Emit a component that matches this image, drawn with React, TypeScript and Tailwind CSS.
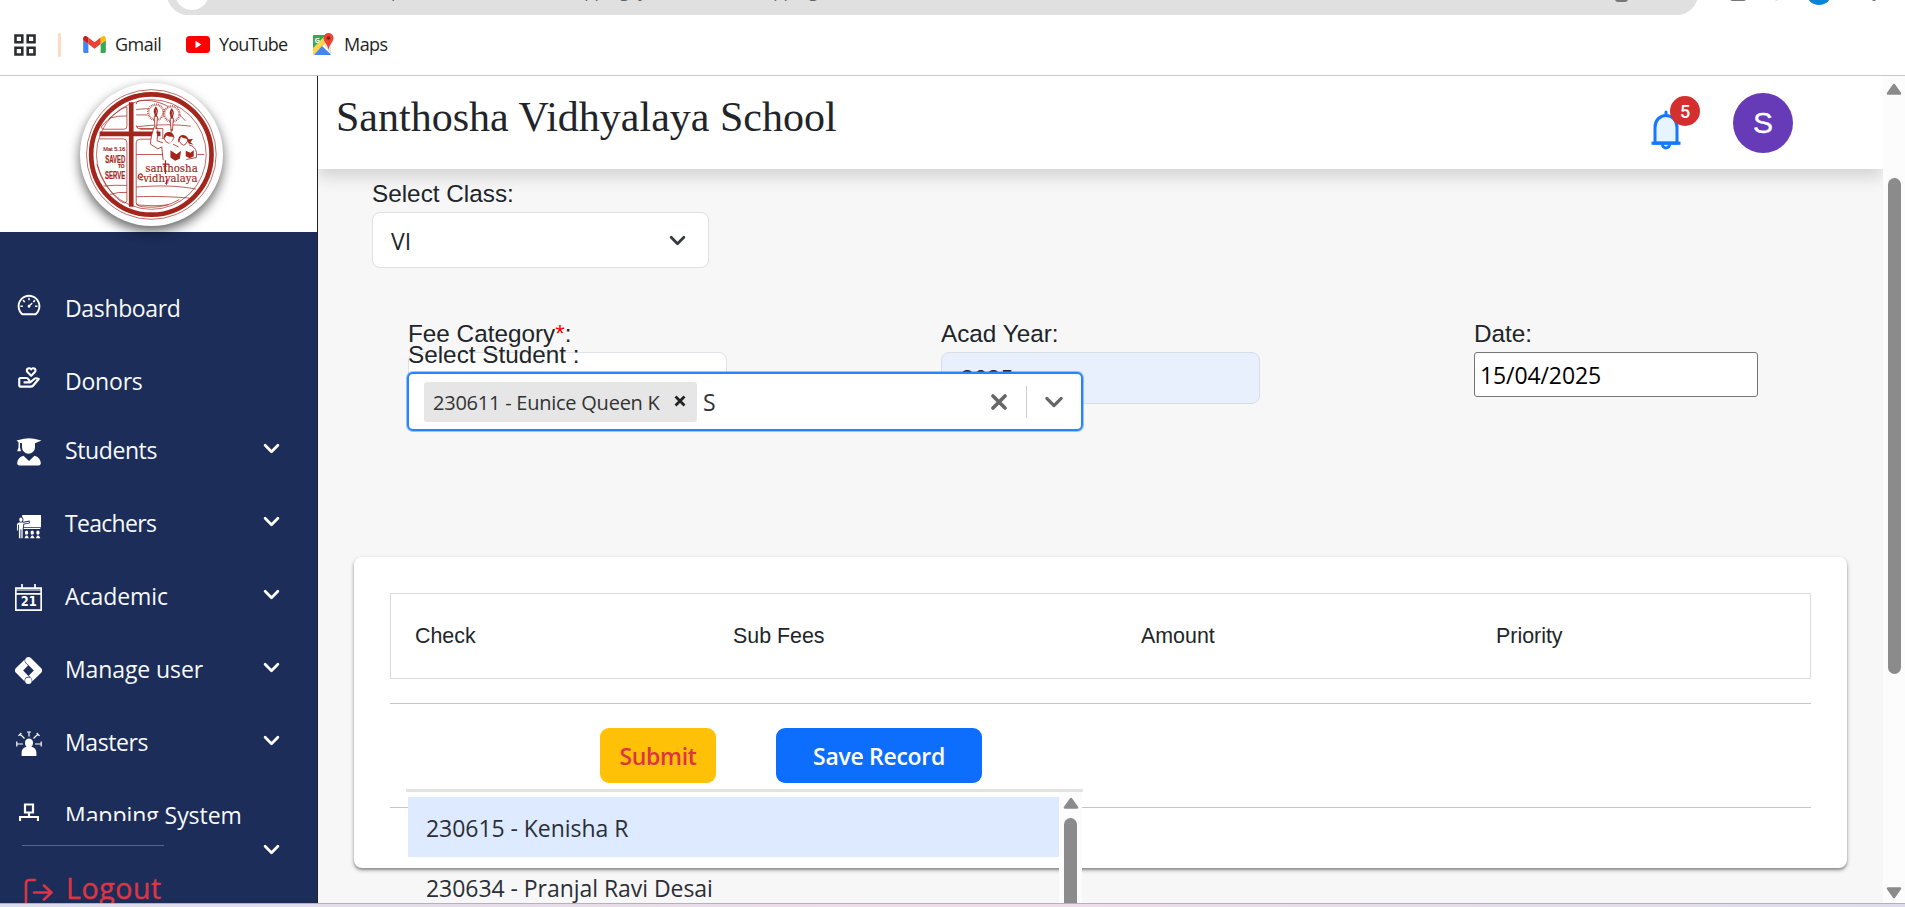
import type { ReactNode } from "react";
import { AiOutlineDashboard } from "react-icons/ai";
import { BiDonateHeart } from "react-icons/bi";
import { GiTeacher } from "react-icons/gi";
import { SiGoogletagmanager } from "react-icons/si";

const UI = "font-['Open_Sans','Noto_Sans',sans-serif]";
const ARIAL = "font-['Liberation_Sans',Arial,sans-serif]";

function Chevron({ className }: { className: string }) {
  return (
    <svg viewBox="0 0 16 10" className={className} fill="none" stroke="currentColor" strokeWidth="2.6" strokeLinecap="round" strokeLinejoin="round">
      <path d="M2 2l6 6 6-6" />
    </svg>
  );
}

function BellIcon() {
  return (
    <svg viewBox="0 0 30 42" className="h-[42px] w-[30px]" fill="none" stroke="#1677ff" strokeWidth="3">
      <path d="M4 34V18.500C4 11.500 8.500 6.500 15 6.500s11 5 11 12V34z" fill="#e6f4ff" />
      <path d="M.5 34.200h29" strokeWidth="3.200" />
      <path d="M15 6V3" strokeWidth="3" strokeLinecap="round" />
      <path d="M11.500 35.500a3.500 3.500 0 0 0 7 0" />
    </svg>
  );
}

function StudentIcon() {
  return (
    <svg viewBox="0 0 26 28" className="mt-1 h-7 w-[26px]" fill="currentColor">
      <path d="M.5 2.600 8 .8q5-1 10 0l7.500 1.800L19 5.300v3.900a6.500 6.500 0 1 1-13 0V5.200l-2-.3v4.300l1 4H1.200l1.300-4V4.300z" />
      <path d="M7.500 17.800 13 23l5.500-5.200c4 1 6 3.600 6.300 7.200.1 1.400-.9 2.400-2.300 2.400h-19c-1.400 0-2.400-1-2.300-2.400.300-3.600 2.300-6.200 6.300-7.200z" />
    </svg>
  );
}

function CalendarIcon() {
  return (
    <svg viewBox="0 0 27 27" className="mt-1 size-[27px]" fill="none" stroke="currentColor">
      <path d="M.8 4.200h25.400v22H.8zM.8 9.800h25.400M7 0v4.500M20 0v4.500" strokeWidth="1.700" />
      <path d="M.8 6h25.400" strokeWidth="1" />
      <text x="13.700" y="21.800" textAnchor="middle" fontSize="13.500" fontWeight="700" fill="currentColor" stroke="none" fontFamily="DejaVu Sans, sans-serif" textLength="16" lengthAdjust="spacingAndGlyphs">21</text>
    </svg>
  );
}

function MastersIcon() {
  return (
    <svg viewBox="0 0 26 26" className="mt-1 size-[26px]" fill="currentColor" stroke="currentColor">
      <path d="M13 7.500a4 4 0 0 1 4 4.200c0 1.800-.6 3.200-1.600 4.100 3.200.7 5 2.700 5 6.200v3H5.600v-3c0-3.500 1.800-5.500 5-6.200-1-.9-1.600-2.300-1.600-4.100a4 4 0 0 1 4-4.200z" stroke="none" />
      <path d="M13 1v4.500M11 1h4M8.500 7.500 4 3M2.500 4.800 5.300 2M17.500 7.500 22 3M23.500 4.800 20.700 2M7 13H1M.8 10.500v5M19 13h6M25.200 10.500v5" fill="none" strokeWidth="1.200" />
    </svg>
  );
}

function MappingIcon() {
  return (
    <svg viewBox="0 0 20 24" className="h-6 w-5" fill="none" stroke="currentColor" strokeWidth="2.2">
      <path d="M6 1.500h8v8H6zM10 9.500V14M1 18v-4h18v4" />
    </svg>
  );
}

function LogoutIcon() {
  return (
    <svg viewBox="0 0 30 30" className="size-[30px] shrink-0" fill="none" stroke="currentColor" strokeWidth="2.600" strokeLinecap="round" strokeLinejoin="round">
      <path d="M11 2H5.500C3.500 2 2 3.200 2 5.200v19.600C2 26.800 3.500 28 5.500 28H11M10 14.500h17.500M20 7.500l7.500 7-7.500 7" />
    </svg>
  );
}

function AppsIcon() {
  return (
    <svg viewBox="0 0 22 22" className="size-[22px]" fill="none" stroke="#2b2c30" strokeWidth="2.600">
      <path d="M1.500 1.500h6.800v6.800H1.500zM13.700 1.500h6.800v6.800h-6.800zM1.500 13.700h6.800v6.800H1.500zM13.700 13.700h6.800v6.800h-6.800z" />
    </svg>
  );
}

function GmailIcon() {
  return (
    <svg viewBox="0 0 24 18" className="h-[17px] w-[23px]">
      <path d="M1.600 18H5.500V8.600L0 4.500v11.900C0 17.300.7 18 1.600 18z" fill="#4285f4" />
      <path d="M18.500 18h3.900c.9 0 1.600-.7 1.600-1.600V4.500l-5.500 4.100z" fill="#34a853" />
      <path d="M18.500 1.700v6.900L24 4.500V2.400c0-2-2.300-3.200-3.900-2z" fill="#fbbc04" />
      <path d="M5.500 8.600V1.700L12 6.500l6.500-4.800v6.900L12 13.400z" fill="#ea4335" />
      <path d="M0 2.400v2.100l5.500 4.100V1.700L3.900.4C2.300-.8 0 .4 0 2.400z" fill="#c5221f" />
    </svg>
  );
}

function YouTubeIcon() {
  return (
    <svg viewBox="0 0 24 17" className="h-[17px] w-6">
      <rect width="24" height="17" rx="3.500" fill="#f00" />
      <path d="M9.500 4.800v7.400l5.800-3.700z" fill="#fff" />
    </svg>
  );
}

function MapsIcon() {
  return (
    <svg viewBox="0 0 24 24" className="size-6">
      <path d="M2 3h18v18H2z" fill="#fff" />
      <path d="M3 2h12L2 16V3c0-.6.4-1 1-1z" fill="#34a853" />
      <path d="M2 15 14 3l3 5L3 22c-.6 0-1-.4-1-1z" fill="#fbd34d" />
      <path d="m11 13 9 8.500c-.2.300-.6.500-1 .5H3z" fill="#4285f4" />
      <path d="m13 12 3-3 4 5v7z" fill="#dfe3e8" />
      <path d="M17.500 0a5 5 0 0 1 5 5c0 3.600-4.300 6.500-5 12-.7-5.500-5-8.400-5-12a5 5 0 0 1 5-5z" fill="#ea4335" />
      <circle cx="17.500" cy="5" r="1.800" fill="#8c1c13" />
      <text x="3.500" y="10" fontSize="7.500" fontWeight="700" fill="#fff" fontFamily="Open Sans, sans-serif">G</text>
    </svg>
  );
}

function Torch({ x, y }: { x: number; y: number }) {
  return (
    <g transform={`translate(${x} ${y})`}>
      <circle r="24" fill="#fff" stroke="#a3251c" strokeWidth="5" strokeDasharray="2 3.400" />
      <circle r="21" fill="#fff" stroke="#a3251c" strokeWidth="1.200" />
      <path d="M0-18c6 8 8 15 5 21l-2 9h-6l-2-9c-3-6-1-13 5-21z" fill="#a3251c" />
      <path d="M0-8c3 5 3 7 0 12" fill="none" stroke="#fff" strokeWidth="1.500" />
      <path d="M-5 13H5L2 50h-4z" fill="#fff" stroke="#a3251c" strokeWidth="2.500" />
    </g>
  );
}

function SchoolLogo() {
  const red = "#a3251c";
  return (
    <svg viewBox="60 20 430 430" className="size-[143px] rounded-full bg-white shadow-[0_5px_12px_rgba(0,0,0,0.62)]">
      <circle cx="274.500" cy="235" r="195" fill="none" stroke={red} strokeWidth="2" />
      <circle cx="274.500" cy="235" r="181" fill="#fff" stroke={red} strokeWidth="14" />
      <circle cx="274.500" cy="235" r="165" fill="none" stroke={red} strokeWidth="2" />
      <g fill="none" stroke={red} strokeWidth="2.200">
        <path d="M229 84q0-10 10-11c60-6 106 24 138 61M229 100c40-5 80-4 112 8M229 116h34M229 152c60-8 120-8 164-2M229 147q2 12 14 12h40M201 92c-20 4-55 35-75 57q-5 10 8 10h58q9 0 9-9zM148 126q25-8 53-7" />
        <path d="M229 380V200q0-11 12-11h68v-32h-70M118 188h72q11 0 11 11v175q-4 12-18 2c-30-20-60-70-72-112M229 235h205M229 333c70-6 130-4 180 6M229 362c60-2 110 0 160 4M229 380q2 10 18 12c50 6 86-6 112-22M229 386c40 4 70 4 98 0M130 330q35-4 71-2M150 355q25-8 51-6" />
      </g>
      <path d="M207 78h14v88h81v14h-81v212h-14V180h-88v-14h88z" fill={red} />
      <Torch x={288} y={108} />
      <Torch x={336} y={113} />
      <path d="M284 150c-8 20-12 40-12 54l22 14 12-6 5 40h104l-5-40-20-12-34 8-24-16-36-4z" fill="#fff" />
      <g fill="none" stroke={red} strokeWidth="2.500">
        <path d="M284 150c-8 20-12 40-12 54l22 14 12-6 4 40M294 160l-2 34 18 6M312 186q14 30 30 0M356 190q16 34 30 0M388 206q18 4 22 22v16l-30 6M340 204l16 8M334 158v14" />
      </g>
      <path d="M312 190c-4-28 30-30 32-4l-6-4q-12 0-18-4zM356 200c-6-34 36-28 30 0l-6-12q-12-2-16-6zM384 190l16-2-8 10 10 8-16-4zM332 222l18 12 14-10-4 24-14 6-14-10zM378 224l14 6 10-8v18l-12 6-12-6z" fill={red} />
      <path d="M322 184q6 4 16 2-2 14-8 14t-8-16zM364 186q8 6 16 2-2 14-8 14t-8-16z" fill="#fff" />
      <g fill={red}>
        <text x="130" y="223" fontSize="17" fontFamily="Liberation Sans, sans-serif" textLength="66" lengthAdjust="spacingAndGlyphs" stroke={red} strokeWidth="0.600">Mat 5.16</text>
        <g fontFamily="Liberation Sans Narrow, Liberation Sans, sans-serif" fontWeight="700" stroke={red} strokeWidth="0.600">
          <text x="136" y="260" fontSize="31" textLength="60" lengthAdjust="spacingAndGlyphs">SAVED</text>
          <text x="174" y="277" fontSize="15" textLength="20" lengthAdjust="spacingAndGlyphs">TO</text>
          <text x="135" y="308" fontSize="31" textLength="61" lengthAdjust="spacingAndGlyphs">SERVE</text>
        </g>
        <g fontFamily="DejaVu Serif, serif" stroke={red} strokeWidth="0.500">
          <text x="256" y="288" fontSize="35" textLength="158" lengthAdjust="spacingAndGlyphs">santhosha</text>
          <text x="250" y="317" fontSize="31" textLength="163" lengthAdjust="spacingAndGlyphs">vidhyalaya</text>
        </g>
      </g>
      <path d="M317 252v42M308 264h19M320 312v14M250 310c-10 4-18-4-14-12s14-4 11 3-8 2-6-1" fill="none" stroke={red} strokeWidth="3.500" />
    </svg>
  );
}

type NavItem = { label: string; icon: ReactNode; chevron?: boolean; row?: string; text: string };

const navItems: NavItem[] = [
  { label: "Dashboard", icon: <AiOutlineDashboard className="mb-[5px] size-[26px]" />, text: "tracking-[-0.35px]" },
  { label: "Donors", icon: <BiDonateHeart className="mb-[5px] size-[26px]" />, text: "tracking-[-0.2px]" },
  { label: "Students", icon: <StudentIcon />, chevron: true, row: "-mt-1", text: "tracking-[-0.4px]" },
  { label: "Teachers", icon: <GiTeacher className="mt-[6px] size-[26px]" />, chevron: true, text: "tracking-[-0.7px]" },
  { label: "Academic", icon: <CalendarIcon />, chevron: true, text: "tracking-[-0.05px]" },
  { label: "Manage user", icon: <SiGoogletagmanager className="mt-[3px] size-[27px]" />, chevron: true, text: "tracking-[-0.1px]" },
  { label: "Masters", icon: <MastersIcon />, chevron: true, text: "tracking-[-0.4px]" },
  { label: "Mapping System", icon: <MappingIcon />, text: "tracking-[-0.05px]" },
];

function BrowserBar() {
  return (
    <div className="flex h-[76px] shrink-0 flex-col overflow-hidden border-b border-[#c8c8c8] bg-white">
      <div className="flex h-[15px] shrink-0 items-end pl-[167px]">
        <div className="flex h-[42px] w-[1531px] shrink-0 items-center rounded-full bg-[#e0e0e0] pl-[8px]">
          <span className="size-[34px] -translate-y-px rounded-full bg-white" />
          <span className="flex pb-[6px] pl-[182px] text-[17px] leading-6 whitespace-pre text-[#5f6368]">
            <span className="w-[168px]">port/</span>
            <span className="w-[189px]">mappingSystem</span>
            <span>mapping</span>
          </span>
          <span className="mr-[70px] ml-auto h-[26px] w-[13px] -translate-y-[5px] rounded-[3px] border-2 border-[#777]" />
        </div>
        <span className="mb-[14px] ml-[31px] h-1 w-[18px] shrink-0 rounded-b bg-[#777]" />
        <span className="mb-[14px] ml-[28px] h-5 w-[3px] shrink-0 rounded bg-[#ffd9c2]" />
        <span className="mb-[10px] ml-[28px] size-[26px] shrink-0 rounded-full bg-[#0a84d6]" />
        <span className="mb-[14px] ml-[40px] size-1 shrink-0 rounded-full bg-[#666]" />
      </div>
      <div className="flex h-[59px] items-center pl-[14px] text-[18px] text-[#1f1f1f]">
        <AppsIcon />
        <span className="ml-[22px] h-6 w-[3px] rounded bg-[#ffd9c2]" />
        <span className="ml-[22px] flex items-center gap-[9px]"><GmailIcon /><span className="w-[71px] tracking-[-0.03em]">Gmail</span></span>
        <span className="flex items-center gap-[9px]"><YouTubeIcon /><span className="w-[92px] tracking-[-0.045em]">YouTube</span></span>
        <span className="flex items-center gap-[9px]"><MapsIcon /><span className="tracking-[-0.03em]">Maps</span></span>
      </div>
    </div>
  );
}

function Sidebar() {
  return (
    <aside className="relative flex w-[318px] shrink-0 flex-col overflow-hidden border-r border-[#20222a] bg-[#1b2d58]">
      <div className="flex h-[156px] shrink-0 justify-center bg-white pt-[7px] pr-[14px]">
        <SchoolLogo />
      </div>
      <nav className="flex flex-col pt-[39px] text-[#f8f9fa]">
        {navItems.map((item) => (
          <div key={item.label} className={`flex h-[73px] shrink-0 items-center ${item.row ?? ""}`}>
            <span className="ml-[10px] flex w-[37px] shrink-0 justify-center text-white">{item.icon}</span>
            <span className={`ml-[18px] text-[23px] leading-9 whitespace-nowrap ${item.text}`}>{item.label}</span>
            {item.chevron && <Chevron className="mr-[37px] mb-[3px] ml-auto h-[11px] w-[17px] text-white" />}
          </div>
        ))}
      </nav>
      <div className="absolute top-[745px] left-0 h-[90px] w-[161px] bg-[#1b2d58]">
        <div className="mt-[24px] ml-[22px] h-px w-[142px] bg-[#566589]" />
        <div className="mt-[22px] flex items-center text-[#dc3545]">
          <span className="mt-[10px] ml-[24px]"><LogoutIcon /></span>
          <span className="ml-[12px] text-[28.5px] leading-10 font-medium tracking-[0.6px] [-webkit-text-stroke:0.4px_#dc3545]">Logout</span>
        </div>
      </div>
      <Chevron className="absolute top-[768px] left-[263px] h-[11px] w-[17px] text-white" />
    </aside>
  );
}

function Header() {
  return (
    <header className="relative z-10 flex h-[93px] shrink-0 bg-white pl-[18px] shadow-[0_8px_16px_rgba(0,0,0,0.15)]">
      <h1 className="pt-[16px] font-['Liberation_Serif',serif] text-[42px] leading-[50px] whitespace-nowrap text-[#212529]">Santhosha Vidhyalaya School</h1>
      <div className="relative mt-[33px] mr-[52px] ml-auto h-[42px] w-[30px]">
        <BellIcon />
        <span className="absolute -top-[13px] left-[19px] flex size-[30px] items-center justify-center rounded-full bg-[#d32f2f] font-['Roboto',sans-serif] text-[18px] font-medium text-white">5</span>
      </div>
      <div className="mt-[17px] mr-[90px] flex size-[60px] items-center justify-center rounded-full bg-[#673ab7] pb-[2px] font-['Liberation_Sans',Arial,sans-serif] text-[30px] text-white [-webkit-text-stroke:0.3px_white]">S</div>
    </header>
  );
}

function StudentSelect() {
  return (
    <div className="absolute top-[23px] left-[-1px] z-10 w-[676px]">
      <div className={`h-[33px] pl-px text-[24.3px] leading-[32px] text-[#212529] ${ARIAL}`}>Select Student :</div>
      <div className="flex h-[59px] items-center rounded-[6px] border-2 border-[#2684ff] bg-white pl-[15px] shadow-[0_0_0_1px_rgba(38,132,255,0.45)]">
        <div className="flex h-10 w-[273px] items-center rounded-[3px] bg-[#e6e6e6] pl-[9px] text-[20px] text-[#333]">
          <span className="pt-[2px] tracking-[-0.24px] whitespace-nowrap">230611 - Eunice Queen K</span>
          <svg viewBox="0 0 12 12" className="mr-[11px] mb-[2px] ml-auto size-3" stroke="#222" strokeWidth="2.800"><path d="M1.500 1.500l9 9M10.500 1.500l-9 9" /></svg>
        </div>
        <span className="ml-[6px] pt-[2px] text-[23px] text-[#333]">S</span>
        <svg viewBox="0 0 16 16" className="ml-auto size-4" stroke="#666" strokeWidth="3.600" strokeLinecap="round"><path d="M2 2l12 12M14 2L2 14" /></svg>
        <span className="ml-[19px] h-8 w-px bg-[#ccc]" />
        <Chevron className="mr-[17px] ml-[17px] h-[12px] w-5 text-[#666]" />
      </div>
    </div>
  );
}

function ScrollArrow({ down }: { down?: boolean }) {
  return (
    <svg viewBox="0 0 16 12" className={`h-3 w-4 shrink-0 ${down ? "rotate-180" : ""}`} fill="#8b8b8b" stroke="#8b8b8b" strokeWidth="2.500" strokeLinejoin="round">
      <path d="M8 2l6 8.500H2z" />
    </svg>
  );
}

function StudentMenu() {
  return (
    <div className="absolute top-[232px] left-[52px] z-10 flex h-[115px] w-[677px] overflow-hidden border-t-[3px] border-[#e3e3e3]">
      <div className="w-[653px] pl-[2px] text-[23px] tracking-[-0.05px] text-[#2b2f36]">
        <div className="h-[5px] bg-white" />
        <div className="flex h-[60px] items-center bg-[#deeaff] pt-[2px] pl-[18px]">230615 - Kenisha R</div>
        <div className="flex h-[60px] items-center pt-[2px] pl-[18px]">230634 - Pranjal Ravi Desai</div>
      </div>
      <div className="flex w-[23px] flex-col items-center bg-[#fcfcfc] pt-[5px]">
        <ScrollArrow />
        <div className="mt-[9px] h-[120px] w-[13px] shrink-0 rounded-full bg-[#8b8b8b]" />
      </div>
    </div>
  );
}

function FeeForm() {
  const label = `h-9 text-[24.3px] leading-9 text-[#212529] ${ARIAL}`;
  return (
    <section className="shrink-0 pt-[7px]">
      <div className="pl-[54px]">
        <div className={label}>Select Class:</div>
        <div className="flex h-14 w-[337px] items-center rounded-lg border border-[#dee2e6] bg-white pt-[2px] pl-[18px] text-[23px] text-[#212529]">
          VI
          <Chevron className="mr-[22px] mb-[2px] ml-auto h-[11px] w-[17px] text-[#343a40]" />
        </div>
      </div>
      <div className="relative mt-12 ml-[90px] grid grid-cols-[533px_533px_1fr]">
        <div>
          <div className={label}>Fee Category<span className="text-[red]">*</span>:</div>
          <div className="h-[52px] w-[319px] rounded-lg border border-[#dee2e6] bg-white" />
        </div>
        <div>
          <div className={label}>Acad Year:</div>
          <div className="h-[52px] w-[319px] rounded-lg border border-[#d9dee6] bg-[#e8effd] pt-[7px] pl-[19px] text-[23px] leading-9 text-[#212529]">2025</div>
        </div>
        <div>
          <div className={label}>Date:</div>
          <div className="flex h-[45px] w-[284px] items-center rounded-[3px] border border-[#767676] bg-white pt-[2px] pl-[5px] text-[23px] tracking-[-0.1px] text-black">15/04/2025</div>
        </div>
        <StudentSelect />
      </div>
    </section>
  );
}

function SubFeesCard() {
  return (
    <section className="relative mt-[153px] ml-[36px] h-[311px] w-[1493px] shrink-0 rounded-lg bg-white px-[36px] pt-[36px] shadow-[0_2px_4px_rgba(0,0,0,0.32),0_2px_2px_rgba(0,0,0,0.2)]">
      <div className={`grid h-[86px] grid-cols-[318px_408px_355px_1fr] items-center border border-[#dcdcdc] pl-[24px] text-[21.4px] text-[#212529] ${ARIAL}`}>
        <span>Check</span>
        <span>Sub Fees</span>
        <span>Amount</span>
        <span>Priority</span>
      </div>
      <div className="mt-6 h-px bg-[#c5c6c7]" />
      <div className="mt-6 flex h-[55px] pl-[210px] text-[23px] font-semibold tracking-[-0.3px]">
        <button className="w-[116px] rounded-[9px] bg-[#ffc107] pt-[2px] text-[#dc3545]">Submit</button>
        <button className="ml-[60px] w-[206px] rounded-[9px] bg-[#0d6efd] pt-[2px] text-white">Save Record</button>
      </div>
      <div className="mt-6 h-px bg-[#c5c6c7]" />
      <StudentMenu />
    </section>
  );
}

export default function App() {
  return (
    <div className={`flex h-[907px] w-[1905px] flex-col overflow-hidden bg-white ${UI}`}>
      <BrowserBar />
      <div className="flex h-[827px] shrink-0 overflow-hidden">
        <Sidebar />
        <main className="flex w-[1565px] shrink-0 flex-col overflow-hidden bg-[#f7f7f7]">
          <Header />
          <FeeForm />
          <SubFeesCard />
        </main>
        <div className="flex flex-1 flex-col items-center bg-[#fcfcfc] pt-[7px] pb-[4px]">
          <ScrollArrow />
          <div className="mt-[83px] h-[496px] w-[13px] rounded-full bg-[#8b8b8b]" />
          <span className="mt-auto flex"><ScrollArrow down /></span>
        </div>
      </div>
      <div className="h-1 shrink-0 border-t border-[#b3b2b9] bg-linear-to-r from-[#dcdcec] via-[#efdce8] to-[#dedcec]" />
    </div>
  );
}
